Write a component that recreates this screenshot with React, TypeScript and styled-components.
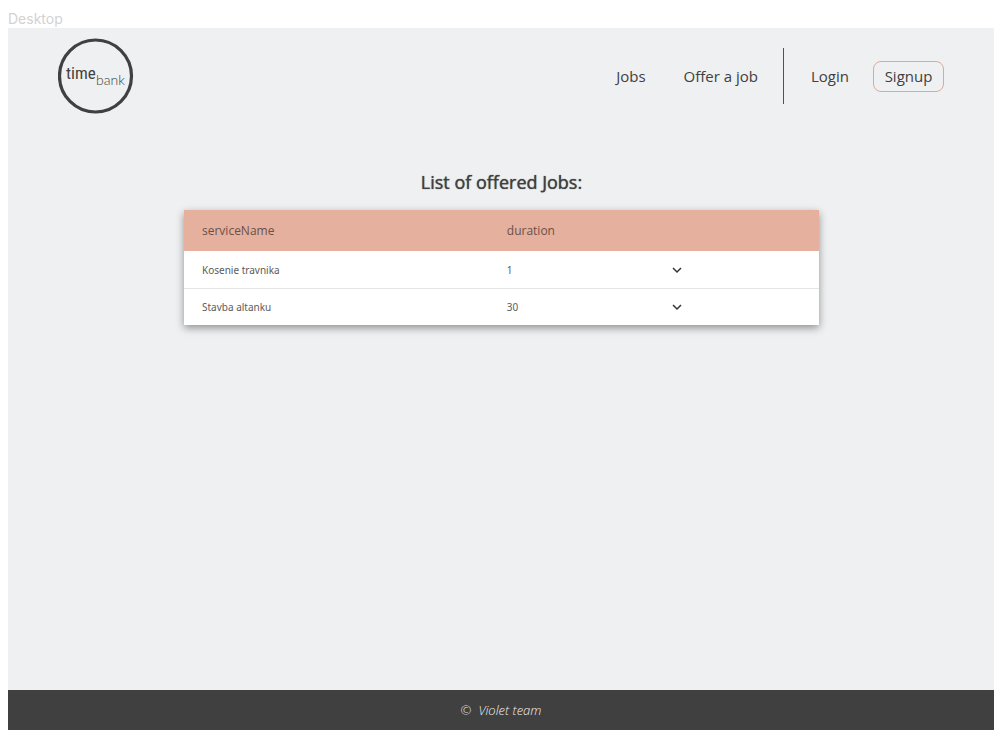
import React from "react";
import styled, { createGlobalStyle } from "styled-components";

const GlobalStyle = createGlobalStyle`
  * { box-sizing: border-box; }
  body {
    margin: 0;
    background: #ffffff;
    color: #404040;
    font-family: "Open Sans", "Noto Sans", sans-serif;
  }
`;

const Canvas = styled.div`
  display: flex;
  flex-direction: column;
  min-height: 100vh;
  padding: 9px 10px 9px 8px;
`;

const FrameLabel = styled.div`
  height: 19px;
  color: #d2d2d2;
  font: 14px/19px Inter, sans-serif;
`;

const Frame = styled.div`
  flex: 1;
  display: flex;
  flex-direction: column;
  background: #eff0f2;
`;

const Header = styled.header`
  display: flex;
  align-items: center;
  justify-content: space-between;
  padding: 10px 50px;
`;

const LogoLink = styled.a`
  display: block;
  height: 76px;
`;

const Nav = styled.nav`
  display: flex;
  align-items: center;
`;

const NavGroup = styled.div<{ $gap: number }>`
  display: flex;
  align-items: center;
  gap: ${(p) => p.$gap}px;
`;

const NavLink = styled.a`
  color: #404040;
  font-size: 15px;
  line-height: 20px;
  text-decoration: none;
`;

const Divider = styled.span`
  width: 1px;
  height: 56px;
  margin: 0 27px 0 25px;
  background: #505254;
`;

const SignupButton = styled.button`
  width: 71px;
  height: 31px;
  padding: 0;
  border: 1px solid #e8a58e;
  border-radius: 8px;
  background: transparent;
  color: #404040;
  font: 15px/20px "Open Sans", sans-serif;
`;

const Main = styled.main`
  flex: 1;
  padding: 45px 175px 40px 176px;
`;

const Title = styled.h1`
  margin: 0 0 15px;
  font-size: 18px;
  font-weight: 500;
  line-height: 26px;
  text-align: center;
  text-shadow: 0 0 1px #404040;
`;

const Table = styled.table`
  width: 100%;
  table-layout: fixed;
  border-spacing: 0;
  background: #ffffff;
  box-shadow: 0 3px 8px rgba(0, 0, 0, 0.4);
`;

const HeadCell = styled.th<{ $width: number }>`
  width: ${(p) => p.$width}%;
  height: 41px;
  padding: 0 18px;
  background: #e5b09e;
  color: #6b5049;
  font-size: 12px;
  font-weight: 500;
  text-align: left;
`;

const Cell = styled.td`
  height: 37px;
  padding: 0 18px;
  color: #5b5b5b;
  font-family: "Noto Sans", sans-serif;
  font-size: 10px;

  tr + tr > & {
    border-top: 1px solid #e4e5e5;
  }
`;

const ExpandButton = styled.button`
  display: flex;
  align-items: center;
  height: 20px;
  padding: 0;
  border: 0;
  background: transparent;
  color: #333333;
`;

const Footer = styled.footer`
  display: flex;
  align-items: center;
  justify-content: center;
  gap: 7px;
  height: 40px;
  background: #404040;
  color: #f0f0f0;
  font: italic 300 13px/20px "Open Sans", sans-serif;
`;

const Copyright = styled.span`
  font-style: normal;
`;

const jobs = [
  { serviceName: "Kosenie travnika", duration: 1 },
  { serviceName: "Stavba altanku", duration: 30 },
];

function Logo() {
  return (
    <svg width="76" height="76" viewBox="0 0 76 76" role="img" aria-label="time bank">
      <circle cx="37.5" cy="38" r="36" fill="none" stroke="#404040" strokeWidth="3.2" />
      <text x="8" y="41" fontFamily="'Roboto Condensed', 'Liberation Sans Narrow', Roboto, sans-serif" fontSize="17" fill="#404040">
        time
      </text>
      <text x="38" y="47" fontFamily="Lato, sans-serif" fontWeight="300" fontSize="14" fill="#404040">
        bank
      </text>
    </svg>
  );
}

function Chevron() {
  return (
    <svg width="10" height="8" viewBox="0 0 10 8" fill="none" stroke="currentColor" strokeWidth="1.5" aria-hidden="true">
      <path d="M1 2 L5 6 L9 2" />
    </svg>
  );
}

export default function App() {
  return (
    <>
      <GlobalStyle />
      <Canvas>
        <FrameLabel>Desktop</FrameLabel>
        <Frame>
          <Header>
            <LogoLink href="#">
              <Logo />
            </LogoLink>
            <Nav>
              <NavGroup $gap={38}>
                <NavLink href="#jobs">Jobs</NavLink>
                <NavLink href="#offer">Offer a job</NavLink>
              </NavGroup>
              <Divider />
              <NavGroup $gap={24}>
                <NavLink href="#login">Login</NavLink>
                <SignupButton type="button">Signup</SignupButton>
              </NavGroup>
            </Nav>
          </Header>
          <Main>
            <Title>List of offered Jobs:</Title>
            <Table>
              <thead>
                <tr>
                  <HeadCell $width={48}>serviceName</HeadCell>
                  <HeadCell $width={26}>duration</HeadCell>
                  <HeadCell $width={26} />
                </tr>
              </thead>
              <tbody>
                {jobs.map((job) => (
                  <tr key={job.serviceName}>
                    <Cell>{job.serviceName}</Cell>
                    <Cell>{job.duration}</Cell>
                    <Cell>
                      <ExpandButton type="button" aria-label={`Show ${job.serviceName}`}>
                        <Chevron />
                      </ExpandButton>
                    </Cell>
                  </tr>
                ))}
              </tbody>
            </Table>
          </Main>
          <Footer>
            <Copyright>©</Copyright>
            <span>Violet team</span>
          </Footer>
        </Frame>
      </Canvas>
    </>
  );
}
